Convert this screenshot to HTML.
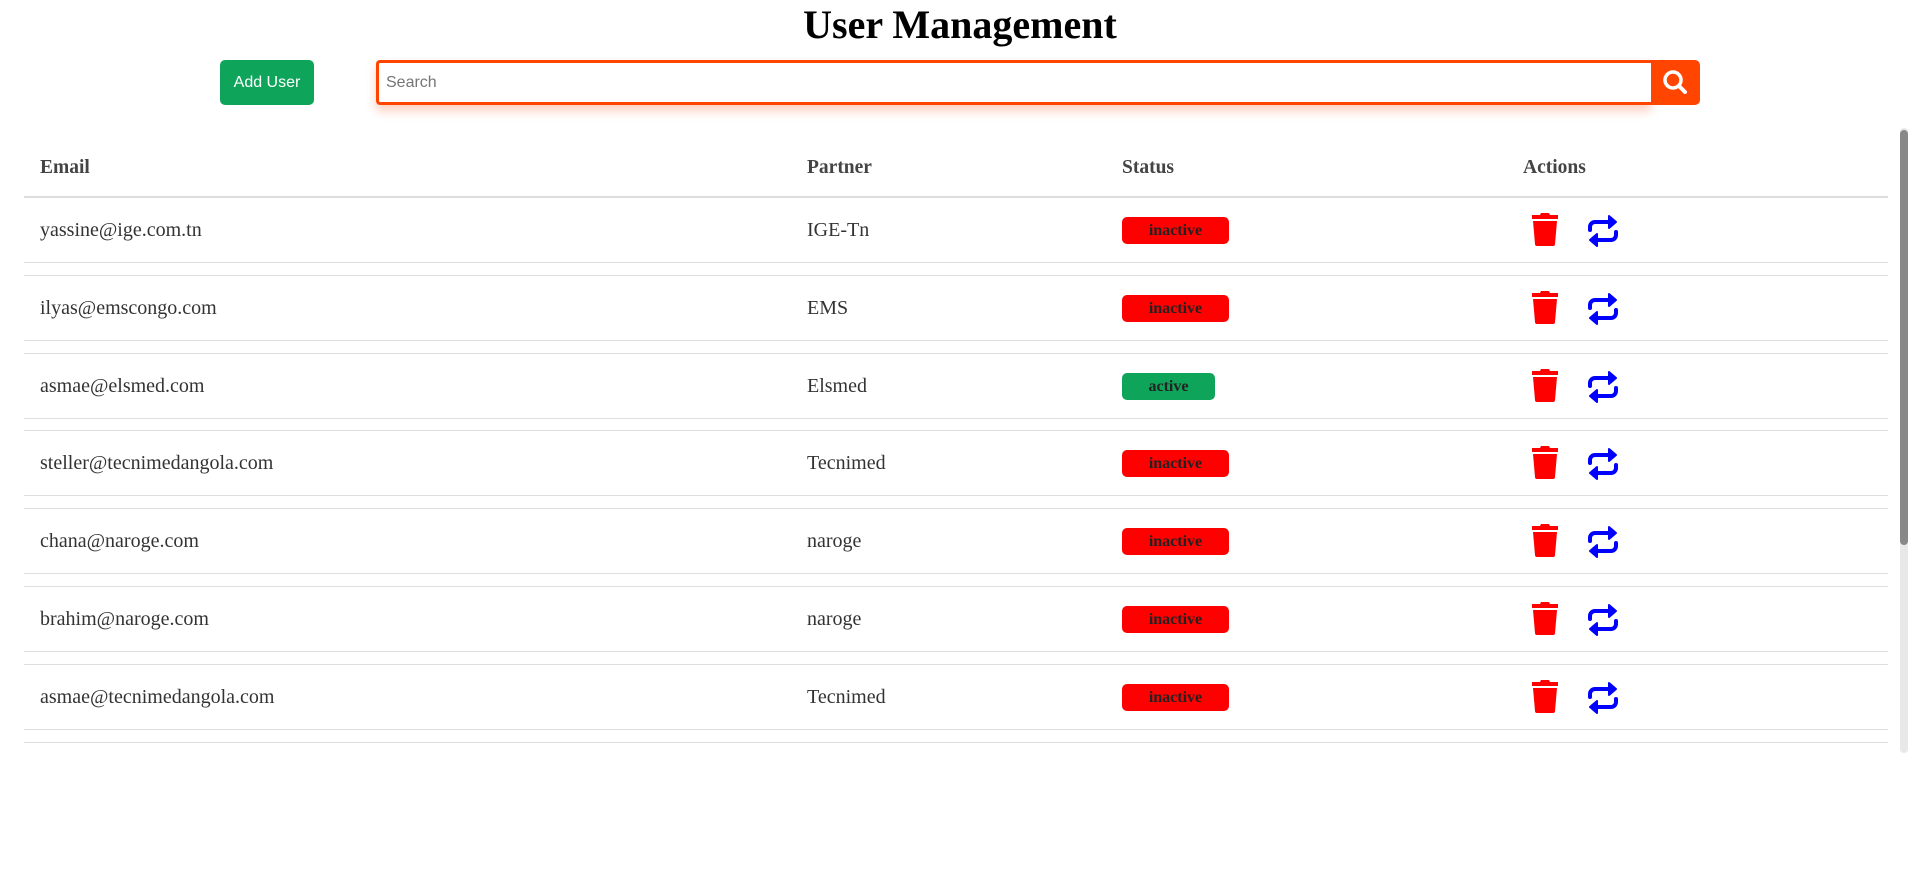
<!DOCTYPE html>
<html><head><meta charset="utf-8"><style>
html,body{margin:0;padding:0;width:1920px;height:880px;overflow:hidden;background:#fff;font-family:"Liberation Serif",serif;}
h1{position:absolute;left:0;width:1920px;top:0;margin:0;text-align:center;font-size:40px;line-height:50px;font-weight:bold;color:#000;}
.add{position:absolute;left:220px;top:60px;width:94px;height:45px;background:#0ea55b;border-radius:5px;color:#fff;font-family:"Liberation Sans",sans-serif;font-size:16px;line-height:45px;text-align:center;}
.search{position:absolute;left:376px;top:60px;width:1275px;height:45px;box-sizing:border-box;border:3px solid #ff4500;border-right:none;border-radius:4px 0 0 4px;box-shadow:0 6px 10px rgba(255,69,0,0.25);font-family:"Liberation Sans",sans-serif;font-size:16px;color:#757575;line-height:39px;padding-left:7px;}
.sbtn{position:absolute;left:1651px;top:60px;width:49px;height:45px;background:#ff4500;border-radius:0 5px 5px 0;}
.tbl{position:absolute;left:24px;top:140px;width:1864px;}
.hd{height:56px;border-bottom:2px solid #ddd;position:relative;font-weight:bold;font-size:19.5px;color:#444;}
.row{height:64px;border-top:1px solid #ddd;border-bottom:1px solid #ddd;position:relative;margin-bottom:11.8px;font-size:20px;color:#333;}
.row.first{border-top:none;}
.c{position:absolute;top:0;line-height:64px;}
.hd .c{line-height:56px;top:0;}
.c1{left:16px}.c2{left:783px}.c3{left:1098px}.c4{left:1499px}
.badge{position:absolute;left:1098px;top:19px;height:27px;border-radius:5px;background:#f00;color:#222;font-weight:bold;font-size:16px;line-height:27px;text-align:center;width:107px;}
.badge.on{background:#0ea55b;width:93px;}
.tr{position:absolute;left:1507px;top:15px;}
.rp{position:absolute;left:1562px;top:17px;}
.lastline{height:0;border-top:1px solid #ddd;}
.sb{position:absolute;left:1900px;top:128px;width:8px;height:625px;background:#e8e8e8;border-radius:4px;}
.sbt{position:absolute;left:1900px;top:130px;width:8px;height:415px;background:#888;border-radius:4px;}
</style></head><body>
<h1>User Management</h1>
<div class="add">Add User</div>
<div class="search">Search</div>
<div class="sbtn"><svg width="49" height="45" viewBox="0 0 49 45"><circle cx="22" cy="20" r="8" fill="none" stroke="#fff" stroke-width="3.5"/><path d="M28 26 L34 32" stroke="#fff" stroke-width="4" stroke-linecap="round"/></svg></div>
<div class="tbl">
<div class="hd"><span class="c c1">Email</span><span class="c c2">Partner</span><span class="c c3">Status</span><span class="c c4">Actions</span></div>
<div class="row first"><span class="c c1">yassine@ige.com.tn</span><span class="c c2">IGE-Tn</span><span class="badge">inactive</span>
<svg class="tr" width="28" height="33" viewBox="0 0 28 33"><path d="M10 0h8l1 2h8v4H1V2h8z" fill="#f00"/><path d="M2 8h24l-2 23a2 2 0 0 1-2 2H6a2 2 0 0 1-2-2z" fill="#f00"/></svg>
<svg class="rp" width="34" height="32" viewBox="0 0 34 32"><path d="M4 15V12a5 5 0 0 1 5-5H24" fill="none" stroke="#00f" stroke-width="4" stroke-linecap="round"/><path d="M23 1L30 7L23 13z" fill="#00f" stroke="#00f" stroke-width="2" stroke-linejoin="round"/><path d="M30 17v3a5 5 0 0 1-5 5H10" fill="none" stroke="#00f" stroke-width="4" stroke-linecap="round"/><path d="M11 19L4 25L11 31z" fill="#00f" stroke="#00f" stroke-width="2" stroke-linejoin="round"/></svg></div>
<div class="row"><span class="c c1">ilyas@emscongo.com</span><span class="c c2">EMS</span><span class="badge">inactive</span>
<svg class="tr" width="28" height="33" viewBox="0 0 28 33"><path d="M10 0h8l1 2h8v4H1V2h8z" fill="#f00"/><path d="M2 8h24l-2 23a2 2 0 0 1-2 2H6a2 2 0 0 1-2-2z" fill="#f00"/></svg>
<svg class="rp" width="34" height="32" viewBox="0 0 34 32"><path d="M4 15V12a5 5 0 0 1 5-5H24" fill="none" stroke="#00f" stroke-width="4" stroke-linecap="round"/><path d="M23 1L30 7L23 13z" fill="#00f" stroke="#00f" stroke-width="2" stroke-linejoin="round"/><path d="M30 17v3a5 5 0 0 1-5 5H10" fill="none" stroke="#00f" stroke-width="4" stroke-linecap="round"/><path d="M11 19L4 25L11 31z" fill="#00f" stroke="#00f" stroke-width="2" stroke-linejoin="round"/></svg></div>
<div class="row"><span class="c c1">asmae@elsmed.com</span><span class="c c2">Elsmed</span><span class="badge on">active</span>
<svg class="tr" width="28" height="33" viewBox="0 0 28 33"><path d="M10 0h8l1 2h8v4H1V2h8z" fill="#f00"/><path d="M2 8h24l-2 23a2 2 0 0 1-2 2H6a2 2 0 0 1-2-2z" fill="#f00"/></svg>
<svg class="rp" width="34" height="32" viewBox="0 0 34 32"><path d="M4 15V12a5 5 0 0 1 5-5H24" fill="none" stroke="#00f" stroke-width="4" stroke-linecap="round"/><path d="M23 1L30 7L23 13z" fill="#00f" stroke="#00f" stroke-width="2" stroke-linejoin="round"/><path d="M30 17v3a5 5 0 0 1-5 5H10" fill="none" stroke="#00f" stroke-width="4" stroke-linecap="round"/><path d="M11 19L4 25L11 31z" fill="#00f" stroke="#00f" stroke-width="2" stroke-linejoin="round"/></svg></div>
<div class="row"><span class="c c1">steller@tecnimedangola.com</span><span class="c c2">Tecnimed</span><span class="badge">inactive</span>
<svg class="tr" width="28" height="33" viewBox="0 0 28 33"><path d="M10 0h8l1 2h8v4H1V2h8z" fill="#f00"/><path d="M2 8h24l-2 23a2 2 0 0 1-2 2H6a2 2 0 0 1-2-2z" fill="#f00"/></svg>
<svg class="rp" width="34" height="32" viewBox="0 0 34 32"><path d="M4 15V12a5 5 0 0 1 5-5H24" fill="none" stroke="#00f" stroke-width="4" stroke-linecap="round"/><path d="M23 1L30 7L23 13z" fill="#00f" stroke="#00f" stroke-width="2" stroke-linejoin="round"/><path d="M30 17v3a5 5 0 0 1-5 5H10" fill="none" stroke="#00f" stroke-width="4" stroke-linecap="round"/><path d="M11 19L4 25L11 31z" fill="#00f" stroke="#00f" stroke-width="2" stroke-linejoin="round"/></svg></div>
<div class="row"><span class="c c1">chana@naroge.com</span><span class="c c2">naroge</span><span class="badge">inactive</span>
<svg class="tr" width="28" height="33" viewBox="0 0 28 33"><path d="M10 0h8l1 2h8v4H1V2h8z" fill="#f00"/><path d="M2 8h24l-2 23a2 2 0 0 1-2 2H6a2 2 0 0 1-2-2z" fill="#f00"/></svg>
<svg class="rp" width="34" height="32" viewBox="0 0 34 32"><path d="M4 15V12a5 5 0 0 1 5-5H24" fill="none" stroke="#00f" stroke-width="4" stroke-linecap="round"/><path d="M23 1L30 7L23 13z" fill="#00f" stroke="#00f" stroke-width="2" stroke-linejoin="round"/><path d="M30 17v3a5 5 0 0 1-5 5H10" fill="none" stroke="#00f" stroke-width="4" stroke-linecap="round"/><path d="M11 19L4 25L11 31z" fill="#00f" stroke="#00f" stroke-width="2" stroke-linejoin="round"/></svg></div>
<div class="row"><span class="c c1">brahim@naroge.com</span><span class="c c2">naroge</span><span class="badge">inactive</span>
<svg class="tr" width="28" height="33" viewBox="0 0 28 33"><path d="M10 0h8l1 2h8v4H1V2h8z" fill="#f00"/><path d="M2 8h24l-2 23a2 2 0 0 1-2 2H6a2 2 0 0 1-2-2z" fill="#f00"/></svg>
<svg class="rp" width="34" height="32" viewBox="0 0 34 32"><path d="M4 15V12a5 5 0 0 1 5-5H24" fill="none" stroke="#00f" stroke-width="4" stroke-linecap="round"/><path d="M23 1L30 7L23 13z" fill="#00f" stroke="#00f" stroke-width="2" stroke-linejoin="round"/><path d="M30 17v3a5 5 0 0 1-5 5H10" fill="none" stroke="#00f" stroke-width="4" stroke-linecap="round"/><path d="M11 19L4 25L11 31z" fill="#00f" stroke="#00f" stroke-width="2" stroke-linejoin="round"/></svg></div>
<div class="row"><span class="c c1">asmae@tecnimedangola.com</span><span class="c c2">Tecnimed</span><span class="badge">inactive</span>
<svg class="tr" width="28" height="33" viewBox="0 0 28 33"><path d="M10 0h8l1 2h8v4H1V2h8z" fill="#f00"/><path d="M2 8h24l-2 23a2 2 0 0 1-2 2H6a2 2 0 0 1-2-2z" fill="#f00"/></svg>
<svg class="rp" width="34" height="32" viewBox="0 0 34 32"><path d="M4 15V12a5 5 0 0 1 5-5H24" fill="none" stroke="#00f" stroke-width="4" stroke-linecap="round"/><path d="M23 1L30 7L23 13z" fill="#00f" stroke="#00f" stroke-width="2" stroke-linejoin="round"/><path d="M30 17v3a5 5 0 0 1-5 5H10" fill="none" stroke="#00f" stroke-width="4" stroke-linecap="round"/><path d="M11 19L4 25L11 31z" fill="#00f" stroke="#00f" stroke-width="2" stroke-linejoin="round"/></svg></div>
<div class="lastline"></div>
</div>
<div class="sb"></div><div class="sbt"></div>
</body></html>
